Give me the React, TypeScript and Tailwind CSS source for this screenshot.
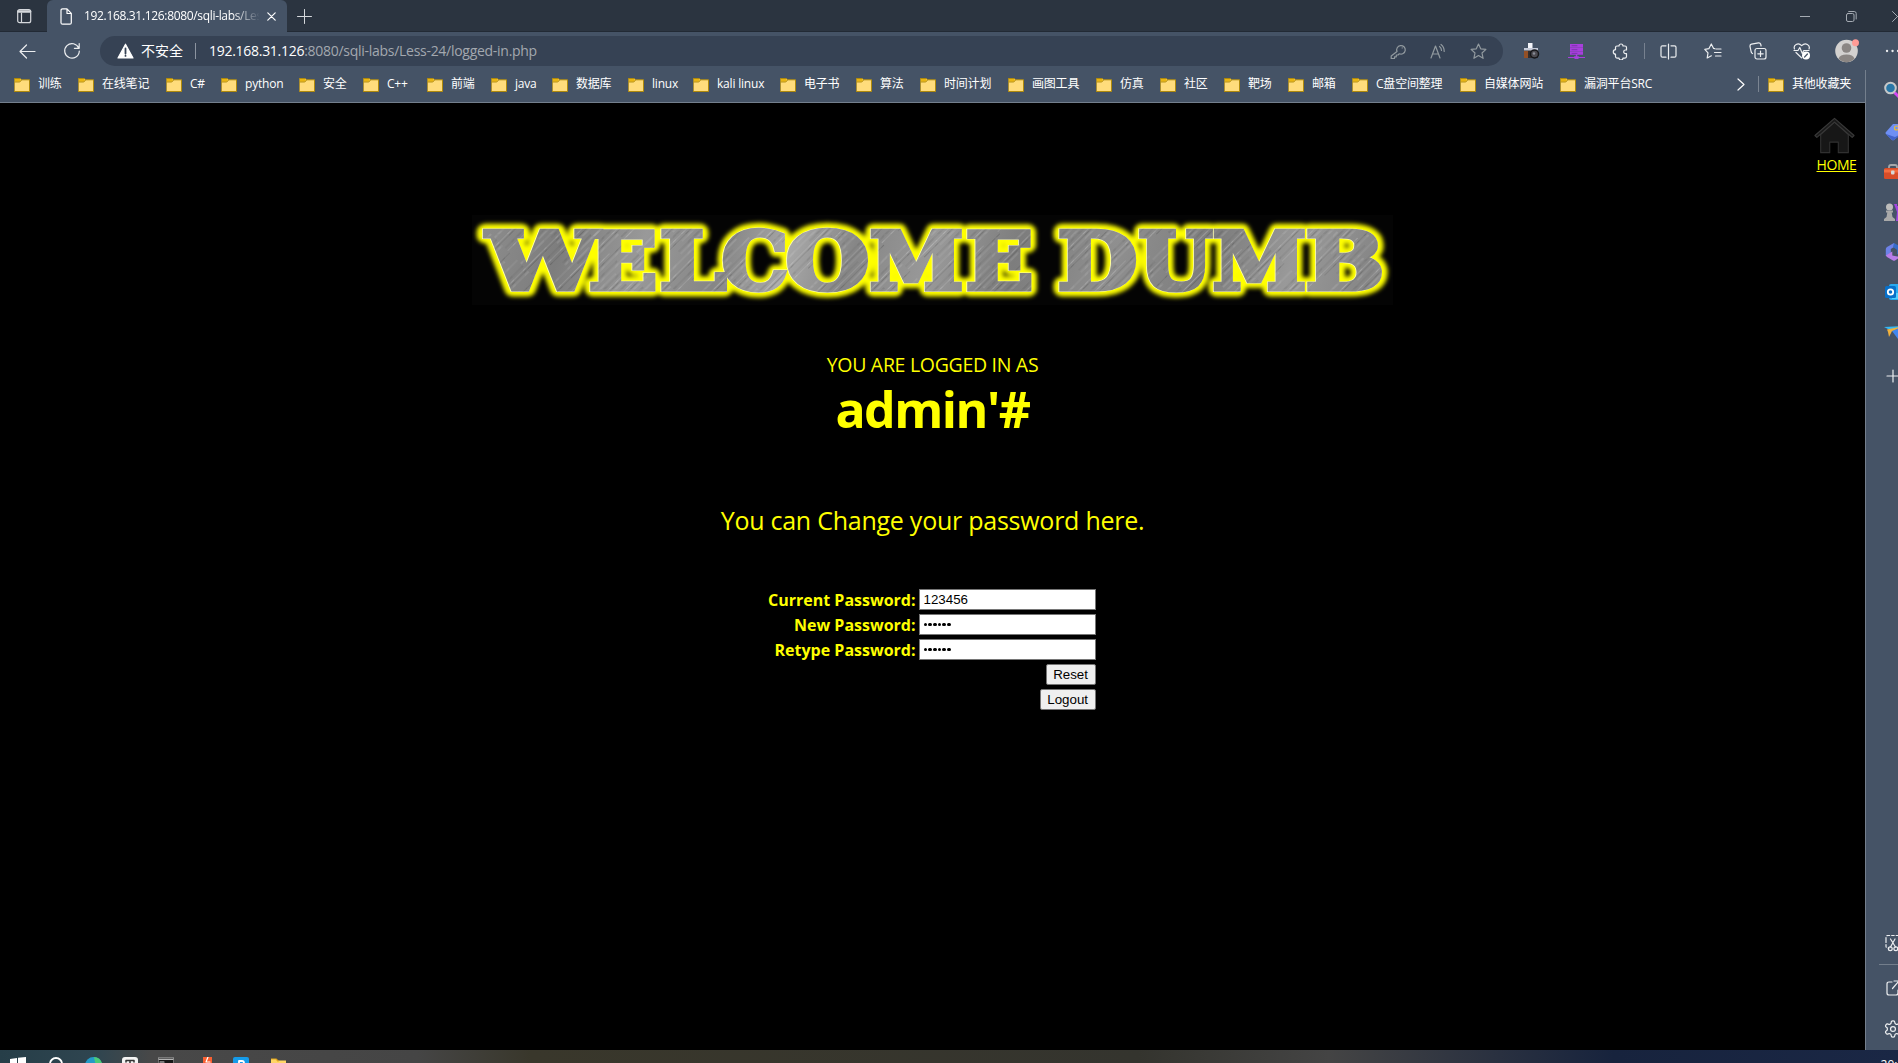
import React from "react";

const UI = "font-['Open_Sans','Noto_Sans_CJK_SC',sans-serif]";

const bookmarks: [string, number][] = [
  ["训练", 64], ["在线笔记", 88], ["C#", 55], ["python", 78], ["安全", 64], ["C++", 64],
  ["前端", 64], ["java", 61], ["数据库", 76], ["linux", 65], ["kali linux", 87], ["电子书", 76],
  ["算法", 64], ["时间计划", 88], ["画图工具", 88], ["仿真", 64], ["社区", 64], ["靶场", 64],
  ["邮箱", 64], ["C盘空间整理", 108], ["自媒体网站", 100], ["漏洞平台SRC", 110],
];

type IconProps = { children: React.ReactNode; w?: number; h?: number; className?: string; box?: string };
const Icon = ({ children, w = 20, h = 20, className = "", box }: IconProps) => (
  <svg width={w} height={h} viewBox={box ?? `0 0 ${w} ${h}`} fill="none" stroke="currentColor" strokeWidth="1.2" strokeLinecap="round" strokeLinejoin="round" className={`shrink-0 ${className}`}>
    {children}
  </svg>
);

const Folder = () => (
  <Icon w={16} h={15}>
    <path d="M.5 1.5h5.8l1.2 1.3h8v11.7H.5z" fill="#ffdc7c" stroke="#b08a0c" strokeWidth="1" />
    <path d="M1 2h5l1 1.2L5.6 4.8H1z" fill="#e9b512" stroke="none" />
    <path d="M1 5h4.8l1.6-1.7" stroke="#b08a0c" strokeWidth=".9" />
  </Icon>
);

const Bookmark = ({ label, width }: { label: string; width?: number }) => (
  <div className="flex shrink-0 items-center gap-2" style={{ width }}>
    <Folder />
    <span className="whitespace-nowrap text-[12px] leading-4 tracking-[-0.2px] text-white">{label}</span>
  </div>
);

const TabStrip = () => (
  <div className="flex h-8 shrink-0 bg-[#2b3440] text-[#d5d8dc] shadow-[inset_0_-1px_0_#222a35]">
    <div className="flex w-[47px] items-center pl-[17px]">
      <Icon w={15} h={15}>
        <rect x=".7" y=".7" width="13" height="13" rx="2" />
        <path d="M1.500 2.500h11.500" strokeWidth="2.600" />
        <path d="M4.500 4v9.500" />
      </Icon>
    </div>
    <div className="flex w-[240px] items-center rounded-t-md bg-[#455366] pl-[13px]">
      <Icon w={12} h={17} className="text-white">
        <path d="M1 2.4Q1 .8 2.6.8H7l4.3 4.5v9.4q0 1.5-1.5 1.5H2.6Q1 16.200 1 14.700zM7 1v4.500h4" />
      </Icon>
      <div className="ml-3 w-[175px] overflow-hidden whitespace-nowrap text-[12px] leading-5 tracking-[-0.33px] text-white [mask-image:linear-gradient(to_right,black_148px,transparent_176px)]">192.168.31.126:8080/sqli-labs/Less-24</div>
      <Icon w={9} h={9} className="ml-[8px] text-white"><path d="M.8.8l7.400 7.400M8.200.8L.8 8.200" /></Icon>
    </div>
    <div className="flex flex-1 items-center pl-[10px]">
      <Icon w={15} h={15}><path d="M7.500.5v14M.5 7.500h14" strokeWidth="1" /></Icon>
    </div>
    <div className="flex w-[98px] items-center overflow-hidden text-[#a5abb3]">
      <Icon w={10} h={10}><path d="M0 5.500h10" strokeWidth="1" /></Icon>
      <Icon w={11} h={11} className="ml-[36px]"><rect x=".5" y="2.500" width="7.500" height="8" rx="1.500" strokeWidth="1" /><path d="M2.700.5h5.500q2 0 2 2V8" strokeWidth="1" /></Icon>
      <Icon w={11} h={11} className="ml-[35px]"><path d="M.5.5l10 10M10.500.5l-10 10" strokeWidth="1" /></Icon>
    </div>
  </div>
);

const star = "M8.500 1l2.200 4.800 5.200.6-3.900 3.600 1.100 5.300-4.600-2.700-4.600 2.700L5 10 1.100 6.400l5.200-.6z";

const Toolbar = () => (
  <div className="flex h-[38px] shrink-0 items-center overflow-hidden bg-[#455366] pl-[19px] text-[#eceef0]">
    <Icon w={17} h={15}><path d="M16 7.500H1M7.500 1L1 7.500l6.500 6.500" /></Icon>
    <Icon w={18} h={18} className="ml-[27px]"><path d="M15.800 6.200A7.300 7.300 0 1 0 16.300 9M16.200 1.500v4.800h-4.800" /></Icon>
    <div className="ml-[19px] flex h-[30px] w-[1403px] shrink-0 items-center rounded-full bg-[#364254] pl-[17px]">
      <Icon w={17} h={16} className="text-white">
        <path d="M8.500 1.200L16 15H1z" fill="currentColor" />
        <path d="M8.500 5.500v5M8.500 12.700v.2" stroke="#364254" strokeWidth="1.800" />
      </Icon>
      <span className="ml-[7px] w-[42px] whitespace-nowrap text-[14px] leading-5 text-white">不安全</span>
      <span className="ml-[12px] h-4 w-px bg-[#8c94a0]" />
      <span className="ml-[13px] whitespace-nowrap text-[14px] leading-5 tracking-[-0.28px] text-[#a3a8af]"><span className="text-white">192.168.31.126</span>:8080/sqli-labs/Less-24/logged-in.php</span>
      <div className="ml-auto mr-[16px] flex items-center gap-[23px] text-[#929a9f]">
        <Icon w={17} h={17}><path d="M7 8.500a4.300 4.300 0 1 1 2.300 2.300L8 12H6.300v1.800H4.500v1.700H1.200V13zM12.200 4.800v.1" /></Icon>
        <Icon w={17} h={17}><path d="M1 15L5.500 3 10 15M2.600 11h5.800M9.500 3.500q2 1.500 2 4M11 1.500q3.300 2.500 3.200 7" /></Icon>
        <Icon w={17} h={17}><path d={star} /></Icon>
      </div>
    </div>
    <div className="ml-5 flex items-center">
      <Icon w={17} h={17}>
        <path d="M5 0h4.500v5H5z" fill="#f4f5fa" stroke="none" /><path d="M1 6h14v9H1z" fill="#322d2c" stroke="none" />
        <path d="M1 8h4v7H1z" fill="#935026" stroke="none" /><path d="M1 5h14v2.500H1z" fill="#c5cad8" stroke="none" />
        <circle cx="11.500" cy="11" r="4" fill="#4d4b51" stroke="#15161a" strokeWidth="1.500" /><circle cx="11" cy="10.500" r="1.200" fill="#8a8e99" stroke="none" />
      </Icon>
      <Icon w={17} h={16} className="ml-[28px]">
        <path d="M2 1h13v3.700H2zM2 5h13v3.700H2zM2 9h13v2.800H2zM7.800 11h1.500v2.200h1.500V14H17v1h-6l-1 1H7l-1-1H0v-1h6.200v-.8h1.600z" fill="#a83fdd" stroke="none" />
        <path d="M4 2.700h5M4 6.700h5M4 10.400h5" stroke="#702aa0" strokeWidth=".7" />
      </Icon>
      <Icon w={17} h={17} className="ml-[27px]"><path d="M5 3h2a2 2 0 0 1 4 0h2q1.500 0 1.500 1.500V7h-1a1.800 1.800 0 0 0 0 3.600h1v3q0 1.500-1.500 1.500h-2a2 2 0 0 1-4 0H5q-1.500 0-1.500-1.500v-2.500a2.200 2.200 0 0 1 0-4.400V4.500Q3.500 3 5 3z" /></Icon>
      <span className="ml-[15px] h-4 w-px bg-[#77818f]" />
      <Icon w={17} h={17} className="ml-[15px]"><path d="M6 2.800H2.500Q1 2.800 1 4.300v8.400q0 1.500 1.500 1.500H6M11 2.800h3.500q1.500 0 1.500 1.500v8.400q0 1.500-1.500 1.500H11M8.500 1v15" /></Icon>
      <Icon w={18} h={17} className="ml-[27px]"><path d="M10.800 5.700L9.600 5.500 7.300 1 5 5.600.8 6.300l3.200 3.500-.8 5.200 4.200-2.200M12 6h5M10.500 9.500H17M11.500 13H17" /></Icon>
      <Icon w={18} h={18} className="ml-[27px]"><rect x="6" y="6.500" width="11" height="10.500" rx="2" /><path d="M11.500 9v5.500M8.800 11.800h5.400M3.500 11.500Q2.500 11 2.200 10L1 4.300Q.8 2.600 2.500 2.200l7-1.400q1.700-.2 2.200 1.400l.4 1.800" /></Icon>
      <Icon w={18} h={18} className="ml-[26px]"><path d="M1.500 7C0 3 5 0 8.700 3.600 12.500 0 17.500 3 16 7M1 8.500h4l1.800-3 2.500 6 1.500-3H16M3 10.500l5.500 5.300" /><circle cx="13" cy="13.500" r="4" fill="#fff" stroke="none" /><path d="M11.600 15l2.800-3" stroke="#455366" /></Icon>
      <Icon w={24} h={24} className="ml-[24px]">
        <circle cx="11.500" cy="12" r="11.300" fill="#d3d1cf" stroke="none" /><circle cx="11.500" cy="9" r="4.800" fill="#8b8683" stroke="none" />
        <path d="M3.500 19.500Q5 15.500 11.500 15.500t8 4Q16 23.300 11.500 23.300t-8-3.800z" fill="#8b8683" stroke="none" /><circle cx="20.500" cy="3.700" r="3.500" fill="#ff9c96" stroke="none" />
      </Icon>
      <Icon w={16} h={4} className="ml-[26px]"><path d="M2 2h.1M7.500 2h.1M13 2h.1" strokeWidth="2.300" /></Icon>
    </div>
  </div>
);

const BookmarksBar = () => (
  <div className="flex h-[33px] shrink-0 items-center border-b border-[#747f8d] bg-[#455366] pb-1 pl-[14px]">
    {bookmarks.map(([label, width]) => <Bookmark key={label} label={label} width={width} />)}
    <div className="ml-auto mr-[14px] flex items-center">
      <Icon w={8} h={13} className="text-white"><path d="M1 1l6 5.500L1 12" /></Icon>
      <span className="ml-[13px] mr-[9px] h-4 w-px bg-[#7b8592]" />
      <Bookmark label="其他收藏夹" />
    </div>
  </div>
);

const letters: [string, number, number][] = [
  ["W", 15, 112], ["E", 117, 68], ["L", 188, 66], ["C", 250, 66], ["O", 314, 83], ["M", 398, 93], ["E", 494, 67],
  ["D", 586, 79], ["U", 667, 73], ["M", 741, 93], ["B", 834, 78],
];

const Lettering = () => (
  <>
    {letters.map(([c, x, w], i) => (
      <text key={i} x={x} y="74" textLength={w} lengthAdjust="spacingAndGlyphs">{c}</text>
    ))}
  </>
);

const Banner = () => (
  <svg width="921" height="90" viewBox="0 0 921 90" fontFamily="'DejaVu Serif', serif" fontWeight="bold" fontSize="79" strokeLinejoin="miter" className="bg-[#040404]">
    <defs>
      <linearGradient id="steel" x1="0" x2="300" y1="0" y2="90" gradientUnits="userSpaceOnUse" spreadMethod="reflect">
        <stop offset="0" stopColor="#8f8f8f" /><stop offset=".3" stopColor="#7d7d7d" /><stop offset=".55" stopColor="#999" /><stop offset=".8" stopColor="#868686" /><stop offset="1" stopColor="#a8a8a8" />
      </linearGradient>
      <pattern id="brushed" width="37" height="90" patternUnits="userSpaceOnUse" patternTransform="rotate(45)">
        <path d="M1.500 0v90M6 0v50M13.500 20v70M19 10v40M27 0v60M32 30v60" stroke="#fff" strokeOpacity=".17" strokeWidth=".7" />
        <path d="M3.500 0v90M10 30v60M16.500 0v70M24 20v40M35 0v50" stroke="#333" strokeOpacity=".2" strokeWidth=".7" />
      </pattern>
      <filter id="glow" x="-5%" y="-30%" width="110%" height="160%"><feGaussianBlur stdDeviation="2" /></filter>
    </defs>
    <g fill="#ff0" stroke="#ff0" strokeWidth="15" strokeLinejoin="round" filter="url(#glow)"><Lettering /></g>
    <g fill="#ffffc0" stroke="#ffffb0" strokeWidth="5.800" transform="translate(-.4 -.4)"><Lettering /></g>
    <g fill="url(#steel)" stroke="url(#steel)" strokeWidth="5.200"><Lettering /></g>
    <g fill="url(#brushed)" stroke="url(#brushed)" strokeWidth="5.200"><Lettering /></g>
  </svg>
);

const Field = ({ label, value, dots }: { label: string; value?: string; dots?: boolean }) => (
  <div className="flex h-[21px] items-center justify-end">
    <span className="mr-[3px] whitespace-nowrap text-[16px] font-bold leading-5">{label}</span>
    <div className="flex h-[21px] w-[177px] items-center border border-[#767676] bg-white pl-1 font-['Liberation_Sans',sans-serif] text-[13.333px] text-black">
      {dots ? <div className="flex gap-[1px]">{[0, 1, 2, 3, 4, 5].map((i) => <span key={i} className="size-[3.700px] rounded-full bg-black" />)}</div> : value}
    </div>
  </div>
);

const Button = ({ children }: { children: React.ReactNode }) => (
  <button className="h-[21px] rounded-[2px] border border-[#767676] bg-[#efefef] px-[6.5px] font-['Liberation_Sans',sans-serif] text-[13.333px] leading-[17px] text-black">{children}</button>
);

const Page = () => (
  <main className="relative flex flex-1 flex-col items-center bg-black text-[#ff0]">
    <div className="absolute right-[7px] top-[13px] flex w-[43px] flex-col items-center">
      <Icon w={41} h={38} box="0 0 43 39" className="mr-1">
        <path d="M7 19v19h9.500V27h9v11H36V19L21.500 6z" fill="#171717" stroke="#303030" />
        <path d="M1 20L21.500 2 42 20l-2 2L21.500 6 3 22z" fill="#1a1a1a" stroke="#393939" />
      </Icon>
      <a className="mt-px text-[14px] leading-5 tracking-[-0.4px] underline underline-offset-1">HOME</a>
    </div>
    <div className="mt-[112px] h-[90px]"><Banner /></div>
    <p className="mt-[48px] h-6 whitespace-nowrap text-[19.500px] leading-6 tracking-[-0.3px]">YOU ARE LOGGED IN AS</p>
    <p className="mt-1 h-14 whitespace-nowrap text-[50px] font-bold leading-[56px] tracking-[-1.5px]">admin&apos;#</p>
    <p className="mt-[65px] h-9 whitespace-nowrap text-[25px] leading-9 tracking-[-0.25px]">You can Change your password here.</p>
    <form className="mr-[2px] mt-[51px] flex w-[328px] flex-col items-end gap-1">
      <Field label="Current Password:" value="123456" />
      <Field label="New Password:" dots />
      <Field label="Retype Password:" dots />
      <Button>Reset</Button>
      <Button>Logout</Button>
    </form>
  </main>
);

const Slot = ({ h, children }: { h: number; children: React.ReactNode }) => (
  <div className="flex shrink-0 items-center pl-[18px]" style={{ height: h }}>{children}</div>
);

const Sidebar = () => (
  <aside className="flex w-[33px] shrink-0 flex-col overflow-hidden border-l border-[#747f8d] bg-[#455366] text-[#eceef0]">
    <Slot h={42}>
      <Icon><path d="M11 12l6 6" stroke="#d447f1" strokeWidth="3" /><circle cx="6.500" cy="7" r="5.300" fill="#2877a7" stroke="#c5c8c9" strokeWidth="2" /></Icon>
    </Slot>
    <Slot h={40}>
      <Icon><path d="M9 2h7l2 2v7l-8 7q-1 .5-2 0l-6-6q-1-1 0-2z" fill="#6e8ff4" stroke="none" /><path d="M2 12l6 6q1 .5 2 0l9-7-8 4z" fill="#4263cb" stroke="none" /><circle cx="12.500" cy="6" r="2" stroke="#e8bd32" /></Icon>
    </Slot>
    <Slot h={40}>
      <Icon><path d="M5 7V5q0-2 2-2h4q2 0 2 2v2" stroke="#a4a7aa" strokeWidth="1.800" /><rect x="0" y="6" width="18" height="11" rx="1.500" fill="#d94d28" stroke="none" /><path d="M0 7.500h18v3H0z" fill="#f46d40" stroke="none" /><rect x="7" y="8.500" width="3.500" height="4" rx="1" fill="#d6d8d8" stroke="none" /></Icon>
    </Slot>
    <Slot h={40}>
      <Icon><path d="M10 2h3v2h3V2h2v17h-6l1-9z" fill="#a345df" stroke="none" /><circle cx="5.500" cy="5" r="3.500" fill="#bdbdbc" stroke="none" /><path d="M2 8.500h7v2H7.700l.8 4.500 2.500 2v2H0v-2l2.500-2 .8-4.500H2z" fill="#a9a9a9" stroke="none" /></Icon>
    </Slot>
    <Slot h={40}>
      <Icon><path d="M10 1L3 5q-1.200.8-1.200 2v7l5-3V7l4-2.500z" fill="#6d82e8" stroke="none" /><path d="M10 1l7 4q1.200.8 1.200 2v7l-5-2V8L9 5z" fill="#356bc8" stroke="none" /><path d="M1.800 13.500l6.500-4v4l5 1 4.500-.8L11 18.500q-1 .6-2 0l-6-3.500z" fill="#b77de8" stroke="none" /></Icon>
    </Slot>
    <Slot h={40}>
      <Icon><rect x="5" y="2" width="14" height="16" rx="2" fill="#29a9ee" stroke="none" /><path d="M8 11h12v6H8z" fill="#50d0ff" stroke="none" /><rect x="1" y="4" width="11" height="12" rx="1.500" fill="#0870c9" stroke="none" /><circle cx="6.500" cy="10" r="2.700" stroke="#fff" strokeWidth="1.800" /></Icon>
    </Slot>
    <Slot h={40}>
      <Icon><path d="M0 5l20-1-12 5z" fill="#36b9f5" stroke="none" /><path d="M8 9l12-5-6 13z" fill="#4086ef" stroke="none" /><path d="M3 7.500L20 4 8 9l-3 6-1-5z" fill="#f2b23c" stroke="none" /></Icon>
    </Slot>
    <Slot h={47}><Icon w={20} h={14} className="ml-[2px]"><path d="M7 1v12M1 7h12" /></Icon></Slot>
    <div className="mt-auto">
      <Slot h={43}><Icon><path d="M2 7V4.500Q2 2.500 4 2.500h12q2 0 2 2V12M2 7v6q0 2 2 2h1" strokeDasharray="2.500 2" /><path d="M6.500 6l5 8M11 6l-4.500 8" /><circle cx="6.300" cy="15.800" r="1.900" /><circle cx="11.800" cy="15.800" r="1.900" /></Icon></Slot>
      <div className="ml-[13px] h-px bg-[#737e8c]" />
      <Slot h={45}><Icon className="ml-[1px]" w={18} h={18}><path d="M7 3H4Q2 3 2 5v9q0 2 2 2h7q2 0 2-2v-3M9 2h5v6M14 2L7.500 9.500" /></Icon></Slot>
      <Slot h={37}><Icon w={18} h={18} box="1 1 22 22"><path d="M12.220 2h-.44a2 2 0 0 0-2 2v.18a2 2 0 0 1-1 1.730l-.43.25a2 2 0 0 1-2 0l-.15-.08a2 2 0 0 0-2.730.73l-.22.38a2 2 0 0 0 .73 2.730l.15.1a2 2 0 0 1 1 1.720v.51a2 2 0 0 1-1 1.740l-.15.09a2 2 0 0 0-.73 2.730l.22.38a2 2 0 0 0 2.730.73l.15-.08a2 2 0 0 1 2 0l.43.25a2 2 0 0 1 1 1.730V20a2 2 0 0 0 2 2h.44a2 2 0 0 0 2-2v-.18a2 2 0 0 1 1-1.730l.43-.25a2 2 0 0 1 2 0l.15.08a2 2 0 0 0 2.730-.73l.22-.39a2 2 0 0 0-.73-2.730l-.15-.08a2 2 0 0 1-1-1.740v-.5a2 2 0 0 1 1-1.740l.15-.09a2 2 0 0 0 .73-2.730l-.22-.38a2 2 0 0 0-2.730-.73l-.15.08a2 2 0 0 1-2 0l-.43-.25a2 2 0 0 1-1-1.730V4a2 2 0 0 0-2-2z" strokeWidth="1.500" /><circle cx="12" cy="12" r="3" strokeWidth="1.500" /></Icon></Slot>
      <div className="h-[3px]" />
    </div>
  </aside>
);

const Taskbar = () => (
  <footer className="flex h-[13px] shrink-0 items-start overflow-hidden bg-[linear-gradient(to_right,#263e48_0%,#2f4550_5%,#484848_8%,#454545_22%,#39372b_28%,#34342e_60%,#444_70%,#17233d_85%,#1a2745_100%)] pl-[10px] pt-[7px]">
    <Icon w={16} h={16}><path d="M0 2l7-1v7H0zM8 .8L16 0v8H8zM0 9h7v6l-7-1zM8 9h8v7l-8-1z" fill="#fff" stroke="none" /></Icon>
    <Icon w={14} h={14} className="ml-[23px]"><circle cx="7" cy="7" r="6" stroke="#fff" strokeWidth="1.800" /></Icon>
    <Icon w={17} h={17} className="ml-[22px]"><circle cx="8.500" cy="8.500" r="8.500" fill="#249bc8" stroke="none" /><path d="M9 0q6 0 8 6l.5 4H11z" fill="#4bcb79" stroke="none" /></Icon>
    <Icon w={16} h={16} className="ml-[20px]"><rect width="16" height="16" rx="3" fill="#f4f4f4" stroke="none" /><path d="M4 5V3.500h8V5M8 4v7" stroke="#333" strokeWidth="1.500" /></Icon>
    <Icon w={16} h={16} className="ml-[20px]"><rect y="1" width="16" height="14" fill="#171717" stroke="#aaa" /><path d="M1 2.500h14" stroke="#b4b4b4" /><path d="M2 5h4" stroke="#ddd" /></Icon>
    <Icon w={9} h={16} className="ml-[29px]"><path d="M0 0h9v16H0z" fill="#fa6032" stroke="none" /><path d="M5 0L3 5h4" stroke="#fff" /></Icon>
    <Icon w={16} h={16} className="ml-[21px]"><rect width="16" height="16" rx="2" fill="#159be9" stroke="none" /><path d="M6 12V4h3a2 2 0 0 1 0 4H6" stroke="#fff" strokeWidth="1.800" /></Icon>
    <Icon w={15} h={15} className="ml-[22px]"><path d="M0 2h5l2 1.500h8V15H0z" fill="#ffd665" stroke="none" /><path d="M0 2h5l2 2" stroke="#e2a51c" /></Icon>
    <span className="ml-auto mr-[-30px] whitespace-nowrap text-[12px] leading-4 text-white">20:32:16</span>
  </footer>
);

export default function App() {
  return (
    <div className={`flex h-screen w-screen flex-col overflow-hidden bg-black ${UI}`}>
      <TabStrip />
      <Toolbar />
      <div className="flex min-h-0 flex-1">
        <div className="flex w-[1865px] shrink-0 flex-col"><BookmarksBar /><Page /></div>
        <Sidebar />
      </div>
      <Taskbar />
    </div>
  );
}
